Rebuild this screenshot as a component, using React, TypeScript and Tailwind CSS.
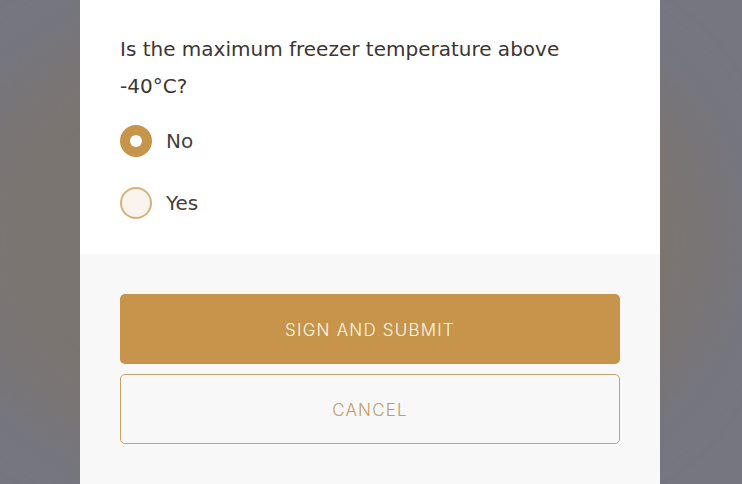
import { useState } from 'react';

const options = ['No', 'Yes'];

export default function App() {
  const [answer, setAnswer] = useState('No');

  return (
    <div
      className="relative h-[484px] w-full overflow-hidden bg-[#75767f]"
      style={{ fontFamily: 'Inter, "Open Sans", sans-serif' }}
    >
      {/* blurred page behind the overlay */}
      <div className="absolute left-[-40px] top-[20px] h-[440px] w-[760px] rounded-full bg-[#7b7572] blur-[30px]" />

      <div className="relative flex h-full pl-[80px]">
        <div className="flex w-[580px] flex-col">
          {/* Question */}
          <div className="bg-white px-10 pt-[31px] pb-[35px]">
            <p
              className="text-[20px] leading-[37px] text-[#3b3632]"
              style={{ fontFamily: '"DejaVu Sans", sans-serif' }}
            >
              Is the maximum freezer temperature above
              <br />
              -40°C?
            </p>

            <div className="mt-5 flex flex-col gap-[30px]">
              {options.map((opt) => {
                const checked = answer === opt;
                return (
                  <label
                    key={opt}
                    onClick={() => setAnswer(opt)}
                    className="flex cursor-pointer items-center gap-[14px]"
                  >
                    {checked ? (
                      <span className="flex h-8 w-8 items-center justify-center rounded-full bg-[#c6944b]">
                        <span className="h-3 w-3 rounded-full bg-white" />
                      </span>
                    ) : (
                      <span className="h-8 w-8 rounded-full border-2 border-[#d6b17c] bg-[#f9f5ec]" />
                    )}
                    <span
                      className="text-[20px] text-[#45403c]"
                      style={{ fontFamily: '"DejaVu Sans", sans-serif' }}
                    >
                      {opt}
                    </span>
                  </label>
                );
              })}
            </div>
          </div>

          {/* Actions */}
          <div className="flex flex-1 flex-col gap-[10px] bg-[#f8f8f8] px-10 pt-10">
            <button className="h-[70px] w-full rounded-[5px] bg-[#c6944b] pt-[3px] text-[17px] font-light tracking-[1.2px] text-[#fff6e6]">
              SIGN AND SUBMIT
            </button>
            <button className="h-[70px] w-full rounded-[5px] border border-[#c9a06a] bg-transparent pt-[3px] text-[17px] font-light tracking-[1.2px] text-[#c39a62]">
              CANCEL
            </button>
          </div>
        </div>
      </div>
    </div>
  );
}
